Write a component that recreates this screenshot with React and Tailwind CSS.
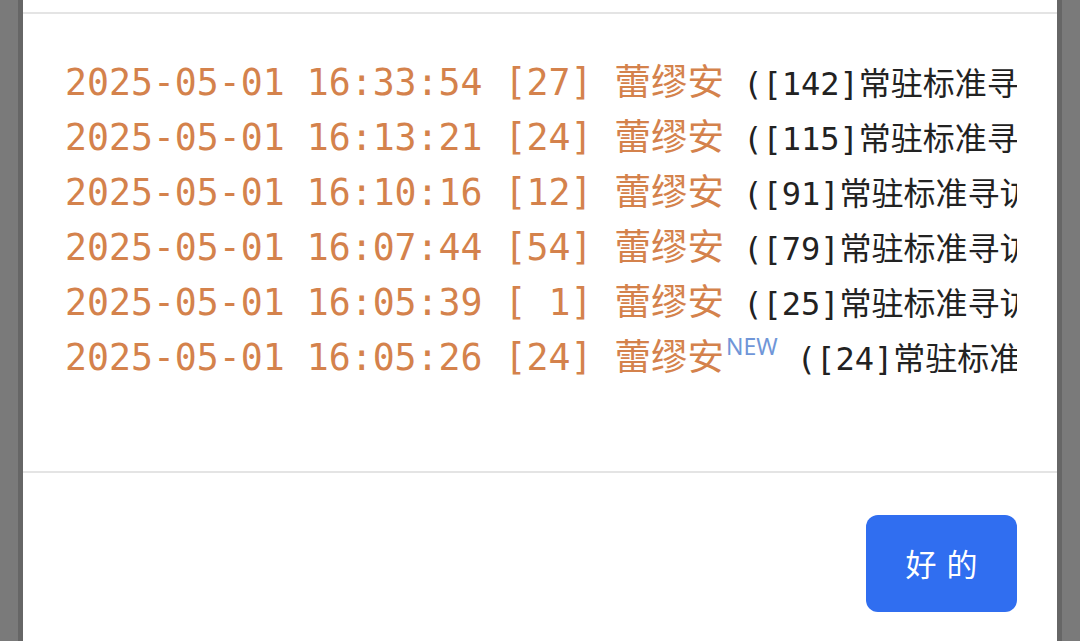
import React from 'react';

const records = [
  { time: '2025-05-01 16:33:54', slot: '[27]', name: '蕾缪安', detail: '([142]常驻标准寻访)' },
  { time: '2025-05-01 16:13:21', slot: '[24]', name: '蕾缪安', detail: '([115]常驻标准寻访)' },
  { time: '2025-05-01 16:10:16', slot: '[12]', name: '蕾缪安', detail: '([91]常驻标准寻访)' },
  { time: '2025-05-01 16:07:44', slot: '[54]', name: '蕾缪安', detail: '([79]常驻标准寻访)' },
  { time: '2025-05-01 16:05:39', slot: '[ 1]', name: '蕾缪安', detail: '([25]常驻标准寻访)' },
  { time: '2025-05-01 16:05:26', slot: '[24]', name: '蕾缪安', detail: '([24]常驻标准寻访)', isNew: true }
];

const mono = { fontFamily: '"DejaVu Sans Mono", "Noto Sans CJK SC", monospace' };

export default function App() {
  return (
    <div className="h-[641px] w-[1080px] overflow-hidden bg-[#7a7a7a] px-[18px]">
      <div className="flex h-full flex-col border-x-[5px] border-[#666666] bg-white">
        <div className="h-[12px] shrink-0" />
        <div className="h-[2px] shrink-0 bg-[#e4e4e4]" />

        <div className="h-[457px] shrink-0 overflow-hidden pl-[42px] pr-[40px] pt-[41px]">
          {records.map((r) => (
            <div
              key={r.time + r.slot}
              className="h-[55px] overflow-hidden whitespace-pre leading-[55px]"
              style={mono}
            >
              <span className="text-[36.5px] leading-[55px] text-[#d4824c]">
                {r.time} {r.slot} {r.name}
              </span>
              {r.isNew && (
                <span
                  className="pl-[2px] align-[15px] text-[23px] leading-none text-[#7096d8]"
                  style={{ fontFamily: '"Noto Sans", sans-serif' }}
                >
                  NEW
                </span>
              )}
              <span className="text-[32px] leading-[55px] text-[#222222]"> {r.detail}</span>
            </div>
          ))}
        </div>

        <div className="h-[2px] shrink-0 bg-[#e4e4e4]" />

        <div className="flex justify-end pr-[40px] pt-[42px]">
          <button
            type="button"
            className="flex h-[97px] w-[151px] items-center justify-center rounded-[12px] bg-[#306ef0] pl-[10px] text-[31px] tracking-[10px] text-white"
            style={{ fontFamily: '"Noto Sans CJK SC", sans-serif' }}
          >
            好的
          </button>
        </div>
      </div>
    </div>
  );
}
